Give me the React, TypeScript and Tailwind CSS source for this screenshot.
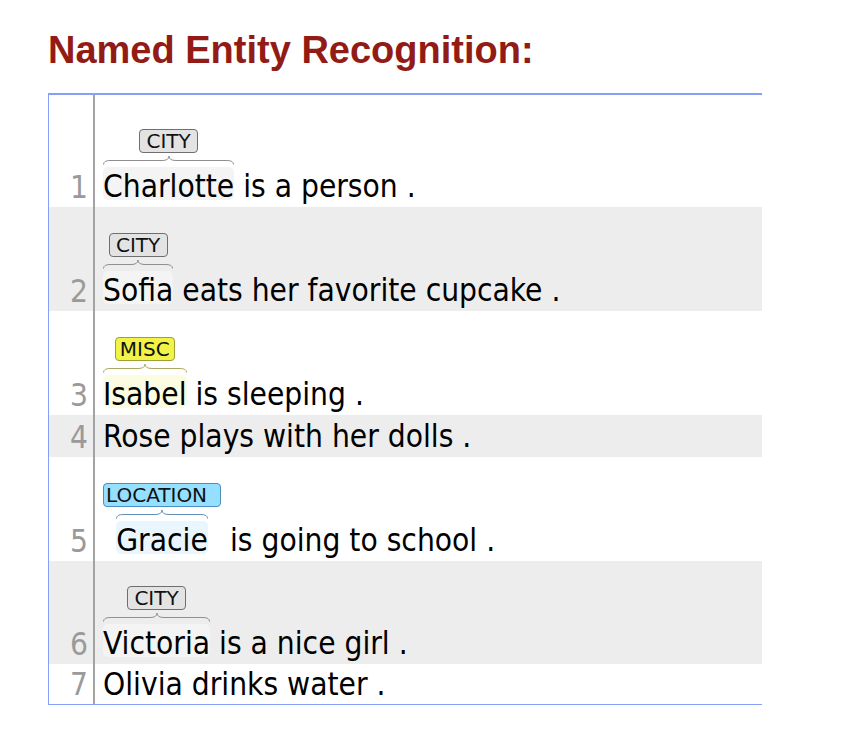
type Ent = {
  text: string;
  box: string;
  brace: string;
  hl: string;
};

const CITY: Ent = {
  text: 'CITY',
  box: 'w-[59px] justify-center bg-[#e3e3e3] border-[#6f6f6f]',
  brace: '#8f8f8f',
  hl: 'bg-[#f4f4f4]',
};
const MISC: Ent = {
  text: 'MISC',
  box: 'w-[60px] justify-center bg-[#f1f447] border-[#9e9e3a]',
  brace: '#a9a862',
  hl: 'bg-[#fcfce2]',
};
const LOCATION: Ent = {
  text: 'LOCATION',
  box: 'w-[118px] pl-[2px] bg-[#95dfff] border-[#4d8dc4]',
  brace: '#6290b8',
  hl: 'bg-[#eaf6fe]',
};

type Row = {
  n: number;
  word?: string;
  ent?: Ent;
  rest: string;
  top?: string;
  h?: string;
};

const rows: Row[] = [
  {n: 1, word: 'Charlotte', ent: CITY, rest: ' is a person .', top: 'pt-[34px]'},
  {n: 2, word: 'Sofia', ent: CITY, rest: ' eats her favorite cupcake .'},
  {n: 3, word: 'Isabel', ent: MISC, rest: ' is sleeping .'},
  {n: 4, rest: 'Rose plays with her dolls .'},
  {n: 5, word: 'Gracie', ent: LOCATION, rest: ' is going to school .'},
  {n: 6, word: 'Victoria', ent: CITY, rest: ' is a nice girl .', top: 'pt-[25px]'},
  {n: 7, rest: 'Olivia drinks water .', h: 'h-[40px] overflow-visible'},
];

function Brace({color}: {color: string}) {
  return (
    <div className="flex h-[12px] w-full">
      <svg width="7" height="12" className="shrink-0">
        <path d="M0.5 11.5 Q0.5 7.5 7 7.5" fill="none" stroke={color} />
      </svg>
      <div className="h-[8px] flex-1 border-b" style={{borderColor: color}} />
      <svg width="14" height="12" className="shrink-0">
        <path d="M0 7.5 Q7 7.5 7 3 Q7 7.5 14 7.5" fill="none" stroke={color} />
      </svg>
      <div className="h-[8px] flex-1 border-b" style={{borderColor: color}} />
      <svg width="7" height="12" className="shrink-0">
        <path d="M0 7.5 Q6.5 7.5 6.5 11.5" fill="none" stroke={color} />
      </svg>
    </div>
  );
}

function Chunk({word, ent}: {word: string; ent: Ent}) {
  return (
    <div className="flex flex-col items-center">
      <div
        className={`flex h-[24px] items-center rounded-[4px] border font-['DejaVu_Sans',sans-serif] text-[20px] leading-[22px] text-[#111] ${ent.box}`}
      >
        {ent.text}
      </div>
      <div className="flex flex-col">
        <Brace color={ent.brace} />
        <div className="relative h-[42px] leading-[42px]">
          <div className={`absolute inset-x-0 top-[2px] h-[33px] rounded-[5px] ${ent.hl}`} />
          <span className="relative">{word}</span>
        </div>
      </div>
    </div>
  );
}

export default function App() {
  return (
    <div className="min-h-[752px] bg-white pl-[48px] font-['DejaVu_Sans_Condensed','Liberation_Sans',sans-serif]">
      <h1 className="pt-[32px] font-['Liberation_Sans',Arial,sans-serif] text-[38px] font-bold leading-[37px] text-[#931b15]">
        Named Entity Recognition:
      </h1>
      <div className="mt-[24px] w-[714px] border-t-2 border-b border-l border-[#86a0f7] text-[31.4px] text-black">
        {rows.map((r) => (
          <div
            key={r.n}
            className={`flex ${r.h ?? ''} ${r.n % 2 === 0 ? 'bg-[#ededed]' : 'bg-white'}`}
          >
            <div className="flex w-[44px] shrink-0 flex-col justify-start pr-[5px] text-right leading-[40px] text-[#9a9a9a] [&:not(:last-child)]:justify-end">
              {r.n}
            </div>
            <div
              className={`flex flex-1 border-l-2 border-[#a3a3a3] pl-[8px] ${
                r.h ? 'items-start' : 'items-end'
              } ${r.ent ? r.top ?? 'pt-[26px]' : ''}`}
            >
              {r.ent && r.word && <Chunk word={r.word} ent={r.ent} />}
              <span className={`whitespace-pre ${r.h ? 'leading-[40px]' : 'leading-[42px]'}`}>
                {r.rest}
              </span>
            </div>
          </div>
        ))}
      </div>
    </div>
  );
}
